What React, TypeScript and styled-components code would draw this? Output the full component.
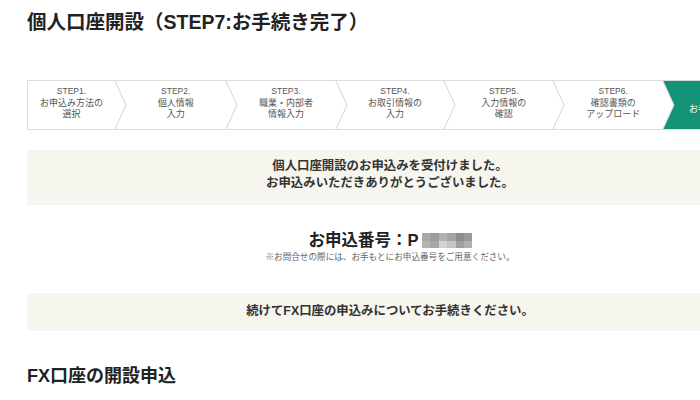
import React from "react";
import styled, { createGlobalStyle } from "styled-components";

const FONT = `"Liberation Sans", "Noto Sans CJK JP", sans-serif`;

const Global = createGlobalStyle`
  html, body { margin: 0; padding: 0; background: #fff; overflow: hidden; }
  body { font-family: ${FONT}; color: #222; }
`;

const Page = styled.div`
  width: 726px;
  padding-left: 27px;
  display: flex;
  flex-direction: column;
`;

const Title = styled.h1`
  margin: 8px 0 0;
  font-size: 19.5px;
  line-height: 28px;
  font-weight: bold;
  color: #222;
  white-space: nowrap;
`;

const StepBar = styled.ol`
  list-style: none;
  margin: 44px 0 0;
  padding: 0;
  display: flex;
  height: 48px;
  width: 800px;
  border-top: 1px solid #dcdcdc;
  border-bottom: 1px solid #dcdcdc;
  border-left: 1px solid #dcdcdc;
`;

const Step = styled.li<{ $w: number; $first?: boolean; $active?: boolean }>`
  position: relative;
  flex: 0 0 ${(p) => p.$w}px;
  box-sizing: border-box;
  padding-left: ${(p) => (p.$first ? 0 : 11)}px;
  padding-bottom: 3px;
  background: ${(p) => (p.$active ? "#139277" : "#fff")};
  color: ${(p) => (p.$active ? "#fff" : "#555")};
  display: flex;
  flex-direction: column;
  align-items: center;
  justify-content: center;
  text-align: center;
  font-size: 9px;
  line-height: 11.5px;
  white-space: nowrap;
`;

const StepLabel = styled.span`
  font-size: 8.5px;
`;

const Chevron = styled.svg`
  position: absolute;
  top: 0;
  left: 100%;
  width: 12px;
  height: 48px;
  z-index: 1;
  overflow: visible;
`;

const Notice = styled.div<{ $pad: string }>`
  background: #f6f6ee;
  padding: ${(p) => p.$pad};
  text-align: center;
  font-size: 12.4px;
  line-height: 17px;
  font-weight: bold;
  color: #333;
`;

const FirstNotice = styled(Notice)`
  margin-top: 20px;
`;

const SecondNotice = styled(Notice)`
  margin-top: 30px;
`;

const OrderBlock = styled.div`
  margin-top: 24px;
  display: flex;
  flex-direction: column;
  align-items: center;
`;

const OrderNumber = styled.div`
  display: flex;
  align-items: center;
  gap: 3px;
  font-size: 16.5px;
  line-height: 22px;
  font-weight: bold;
  color: #222;
`;

const OrderNote = styled.p`
  margin: 0;
  font-size: 8.6px;
  line-height: 12px;
  color: #666;
`;

const SectionTitle = styled.h2`
  margin: 32px 0 0;
  font-size: 18px;
  line-height: 26px;
  font-weight: bold;
  color: #222;
`;

const steps = [
  { label: "STEP1.", lines: ["お申込み方法の", "選択"], w: 87 },
  { label: "STEP2.", lines: ["個人情報", "入力"], w: 110.5 },
  { label: "STEP3.", lines: ["職業・内部者", "情報入力"], w: 110 },
  { label: "STEP4.", lines: ["お取引情報の", "入力"], w: 108 },
  { label: "STEP5.", lines: ["入力情報の", "確認"], w: 109.5 },
  { label: "STEP6.", lines: ["確認書類の", "アップロード"], w: 109.5 },
];

const ChevronIcon = ({ fill }: { fill: string }) => (
  <Chevron viewBox="0 0 12 48">
    <polygon points="0,0 11,24 0,48" fill={fill} />
    {fill === "#fff" && (
      <polyline points="0,0 11,24 0,48" fill="none" stroke="#d4d4d4" strokeWidth="1" />
    )}
  </Chevron>
);

const Mosaic = () => (
  <svg width="50" height="15" viewBox="0 0 50 15">
    <rect x="0" y="0" width="8" height="8" fill="#a9a9a9" />
    <rect x="8" y="0" width="9" height="8" fill="#9d9d9d" />
    <rect x="17" y="0" width="8" height="8" fill="#b1b1b1" />
    <rect x="25" y="0" width="9" height="8" fill="#a4a4a4" />
    <rect x="34" y="0" width="8" height="8" fill="#8c8c8c" />
    <rect x="42" y="0" width="8" height="8" fill="#9a9a9a" />
    <rect x="0" y="8" width="8" height="7" fill="#b3b3b3" />
    <rect x="8" y="8" width="9" height="7" fill="#a6a6a6" />
    <rect x="17" y="8" width="8" height="7" fill="#d2d2d2" />
    <rect x="25" y="8" width="9" height="7" fill="#c4c4c4" />
    <rect x="34" y="8" width="8" height="7" fill="#a0a0a0" />
    <rect x="42" y="8" width="8" height="7" fill="#b0b0b0" />
  </svg>
);

export default function App() {
  return (
    <>
      <Global />
      <Page>
        <Title>個人口座開設（STEP7:お手続き完了）</Title>
        <StepBar>
          {steps.map((s, i) => (
            <Step key={s.label} $w={s.w} $first={i === 0}>
              <StepLabel>{s.label}</StepLabel>
              {s.lines.map((l) => (
                <span key={l}>{l}</span>
              ))}
              <ChevronIcon fill="#fff" />
            </Step>
          ))}
          <Step $w={96} $active>
            <StepLabel>STEP7.</StepLabel>
            <span>お手続き完了</span>
            <ChevronIcon fill="#139277" />
          </Step>
        </StepBar>
        <FirstNotice $pad="8px 0 13px">
          個人口座開設のお申込みを受付けました。
          <br />
          お申込みいただきありがとうございました。
        </FirstNotice>
        <OrderBlock>
          <OrderNumber>
            <span>お申込番号：P</span>
            <Mosaic />
          </OrderNumber>
          <OrderNote>※お問合せの際には、お手もとにお申込番号をご用意ください。</OrderNote>
        </OrderBlock>
        <SecondNotice $pad="10px 0 11px">
          続けてFX口座の申込みについてお手続きください。
        </SecondNotice>
        <SectionTitle>FX口座の開設申込</SectionTitle>
      </Page>
    </>
  );
}
